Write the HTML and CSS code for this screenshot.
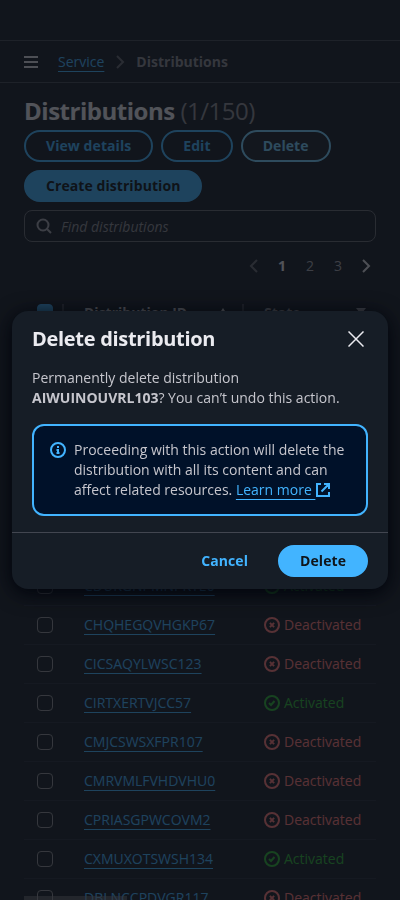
FILE: index.html
```html
<!DOCTYPE html>
<html lang="en">
<head>
  <meta charset="UTF-8">
  <meta name="viewport" content="width=device-width, initial-scale=1.0">
  <title>Delete distribution</title>
  <link rel="stylesheet" href="styles.css">
</head>
<body>

<svg class="sprite" aria-hidden="true">
  <symbol id="icon-error" viewBox="0 0 16 16">
    <circle cx="8" cy="8" r="7"/>
    <path d="m10.100 5.900-4.200 4.200M10.100 10.100 5.900 5.900"/>
  </symbol>
  <symbol id="icon-success" viewBox="0 0 16 16">
    <circle cx="8" cy="8" r="7"/>
    <path d="m5 8 2 2 3.500-4"/>
  </symbol>
</svg>

<div class="page">
  <header class="top-bar"></header>

  <nav class="breadcrumbs">
    <svg class="icon menu" viewBox="0 0 16 16"><path d="M1 3h14M1 8h14M1 13h14"/></svg>
    <a class="link" href="#">Service</a>
    <svg class="icon crumb-arrow" viewBox="0 0 16 16"><path d="m5 2 6 6-6 6"/></svg>
    <span class="current">Distributions</span>
  </nav>

  <main>
    <h1>Distributions <span class="counter">(1/150)</span></h1>
    <div class="actions">
      <button class="btn">View details</button>
      <button class="btn">Edit</button>
      <button class="btn active">Delete</button>
      <button class="btn primary">Create distribution</button>
    </div>

    <div class="search">
      <svg class="icon" viewBox="0 0 16 16"><circle cx="7" cy="7" r="5.500"/><path d="m15 15-4.500-4.500"/></svg>
      <span>Find distributions</span>
    </div>

    <div class="pagination">
      <svg class="icon disabled" viewBox="0 0 16 16"><path d="m11 2-6 6 6 6"/></svg>
      <span class="current-page">1</span>
      <span>2</span>
      <span>3</span>
      <svg class="icon" viewBox="0 0 16 16"><path d="m5 2 6 6-6 6"/></svg>
    </div>

    <table id="distributions">
      <thead>
        <tr>
          <th class="select"><span class="checkbox checked"></span></th>
          <th class="id"><div class="head">Distribution ID <svg class="sort" viewBox="0 0 16 16"><path d="M8 4l4 6H4z"/></svg></div></th>
          <th class="state"><div class="head">State <svg class="sort" viewBox="0 0 16 16"><path d="M3 4h10l-5 6.500z"/></svg></div></th>
        </tr>
      </thead>
      <tbody></tbody>
    </table>
  </main>
  <div class="scrollbar"></div>
</div>

<div class="overlay">
  <div class="modal" role="dialog">
    <div class="modal-header">
      <h2>Delete distribution</h2>
      <svg class="close" viewBox="0 0 16 16"><path d="m.5.5 15 15M15.500.5l-15 15"/></svg>
    </div>
    <div class="modal-body">
      <p>Permanently delete distribution <b>AIWUINOUVRL103</b>? You can’t undo this action.</p>
      <div class="alert">
        <svg class="icon" viewBox="0 0 16 16"><circle cx="8" cy="8" r="7"/><path d="M8 11.500V8H6.500M6.500 11h3M8 4v2"/></svg>
        <div>Proceeding with this action will delete the distribution with all its content and can affect related resources. <a class="link" href="#">Learn more </a><svg class="icon external" viewBox="0 0 16 16"><path d="M14 10v4H2V2h4M9 2h5v5M6.500 9.500 14 2"/></svg></div>
      </div>
    </div>
    <div class="modal-footer">
      <button class="btn plain">Cancel</button>
      <button class="btn primary">Delete</button>
    </div>
  </div>
</div>

<script>
  const distributions = [
    { id: 'AIWUINOUVRL103', active: false },
    { id: 'AKSNMPWDTLH28', active: true },
    { id: 'ATLQVEJRXSB91', active: false },
    { id: 'BDMWPOKQYHC14', active: true },
    { id: 'BGNXTRUEJPL62', active: false },
    { id: 'BVRHQYSMKDO35', active: false },
    { id: 'CDUKGNPMNPKYE0', active: true },
    { id: 'CHQHEGQVHGKP67', active: false },
    { id: 'CICSAQYLWSC123', active: false },
    { id: 'CIRTXERTVJCC57', active: true },
    { id: 'CMJCSWSXFPR107', active: false },
    { id: 'CMRVMLFVHDVHU0', active: false },
    { id: 'CPRIASGPWCOVM2', active: false },
    { id: 'CXMUXOTSWSH134', active: true },
    { id: 'DBLNCCPDVGR117', active: false }
  ];

  const tbody = document.querySelector('#distributions tbody');

  distributions.forEach(item => {
    const status = item.active ? 'success' : 'error';
    const row = tbody.insertRow();
    row.innerHTML = `
      <td class="select"><span class="checkbox"></span></td>
      <td class="id"><a class="link" href="#">${item.id}</a></td>
      <td class="state">
        <span class="status ${status}">
          <svg class="icon"><use href="#icon-${status}"/></svg>
          ${item.active ? 'Activated' : 'Deactivated'}
        </span>
      </td>
    `;
  });
</script>

</body>
</html>
```
FILE: styles.css
```css
* {
  box-sizing: border-box;
}

body {
  margin: 0;
  height: 100vh;
  overflow: hidden;
  background-color: #161d26;
  color: #c6c6cd;
  font-family: "Open Sans", sans-serif;
  font-size: 14px;
  line-height: 20px;
}

.sprite {
  display: none;
}

.page {
  height: 100vh;
  overflow: hidden;
}

.icon {
  width: 16px;
  height: 16px;
  flex: none;
  fill: none;
  stroke: currentColor;
  stroke-width: 2px;
}

.link {
  color: #42b4ff;
  text-decoration: underline;
  text-decoration-thickness: 1px;
  text-underline-offset: 4.4px;
  text-decoration-skip-ink: none;
}

.top-bar {
  height: 41px;
  border-bottom: 1px solid #424650;
}

.breadcrumbs {
  display: flex;
  align-items: center;
  height: 42px;
  padding-left: 23px;
  border-bottom: 1px solid #424650;
}

.breadcrumbs .menu {
  margin-right: 19px;
  color: #dedee3;
}

.crumb-arrow {
  margin: 0 8px;
  color: #656871;
}

.breadcrumbs .current {
  color: #8c8c94;
  font-weight: 700;
}

main {
  padding: 13px 24px 0;
}

h1 {
  margin: 0;
  padding-bottom: 4px;
  color: #ebebf0;
  font-size: 24px;
  line-height: 30px;
  letter-spacing: -0.48px;
}

.counter {
  color: #8c8c94;
  font-weight: 400;
}

.actions {
  display: flex;
  flex-wrap: wrap;
  gap: 8px;
}

.btn {
  height: 32px;
  padding: 0 20px;
  border: 2px solid #42b4ff;
  border-radius: 20px;
  background: none;
  color: #42b4ff;
  font: inherit;
  font-weight: 700;
  letter-spacing: 0.07px;
}

.btn.active {
  border-color: #75cfff;
  background-color: #1b232d;
  color: #75cfff;
}

.btn.primary {
  background-color: #42b4ff;
  color: #0f141a;
}

.btn.plain {
  border-color: transparent;
}

.search {
  display: flex;
  align-items: center;
  gap: 8px;
  height: 32px;
  margin-top: 8px;
  padding-left: 11px;
  border: 1px solid #656871;
  border-radius: 8px;
  color: #a4a4ad;
}

.search span {
  padding: 2px 0 0 1px;
  color: #8c8c94;
  font-style: italic;
}

.pagination {
  display: flex;
  justify-content: flex-end;
  align-items: center;
  height: 32px;
  margin-top: 8px;
  padding-right: 2px;
  color: #a4a4ad;
}

.pagination span {
  width: 28px;
  text-align: center;
}

.pagination .icon {
  margin: 0 6px;
}

.pagination .icon:last-child {
  margin-right: 0;
  color: #dedee3;
}

.pagination .disabled {
  color: #656871;
}

.pagination .current-page {
  color: #ebebf0;
  font-weight: 700;
}

table {
  width: 100%;
  margin-top: 10px;
  border-collapse: separate;
  border-spacing: 0;
  table-layout: fixed;
}

th, td {
  height: 39px;
  padding: 0;
  border-bottom: 1px solid #232b37;
  text-align: left;
  vertical-align: middle;
}

th {
  height: 41px;
}

.select {
  width: 38px;
  padding-left: 13px;
}

.id {
  width: 180px;
  padding-left: 22px;
}

.state {
  padding-left: 22px;
}

th.id, th.state {
  background: linear-gradient(#424650, #424650) no-repeat 0 50% / 2px 16px;
}

.head {
  display: flex;
  justify-content: space-between;
  padding: 2px 11px 0 0;
}

th.id .head {
  color: #dedee3;
}

th.state .head {
  padding-right: 7px;
  color: #a4a4ad;
}

.sort {
  width: 16px;
  height: 16px;
  margin-top: 1px;
  fill: currentColor;
}

.checkbox {
  display: block;
  width: 16px;
  height: 16px;
  border: 1px solid #8c8c94;
  border-radius: 4px;
}

.checkbox.checked {
  border-color: #42b4ff;
  background-color: #42b4ff;
}

.status {
  display: flex;
  align-items: center;
  gap: 4px;
}

.status.error {
  color: #ff7a7a;
}

.status.success {
  color: #2bb534;
}

.scrollbar {
  position: absolute;
  left: 24px;
  bottom: 0;
  width: 103px;
  height: 4px;
  background-color: rgba(140, 140, 148, 0.5);
}

.overlay {
  position: fixed;
  inset: 0;
  display: flex;
  align-items: center;
  padding: 0 12px;
  background-color: rgba(15, 18, 24, 0.7);
}

.modal {
  width: 100%;
  border-radius: 16px;
  background-color: #161d26;
  box-shadow: 0 4px 20px 1px rgba(0, 4, 12, 1);
}

.modal-header {
  display: flex;
  justify-content: space-between;
  align-items: center;
  padding: 16px 24px 0 20px;
}

h2 {
  margin: 0;
  color: #ebebf0;
  font-size: 20px;
  line-height: 24px;
  letter-spacing: -0.3px;
}

.close {
  width: 16px;
  height: 16px;
  margin-bottom: 1px;
  fill: none;
  stroke: #ebebf0;
  stroke-width: 1.5px;
}

.modal-body {
  padding: 17px 20px 16px;
}

.modal-body p {
  margin: 0 0 16px;
}

.alert {
  display: flex;
  gap: 8px;
  padding: 14px 16px;
  border: 2px solid #42b4ff;
  border-radius: 12px;
  background-color: #001129;
}

.alert > .icon {
  margin-top: 2px;
  color: #42b4ff;
}

.external {
  color: #42b4ff;
  vertical-align: -3px;
}

.modal-footer {
  display: flex;
  justify-content: flex-end;
  gap: 8px;
  padding: 12px 20px;
  border-top: 1px solid #424650;
}
```
